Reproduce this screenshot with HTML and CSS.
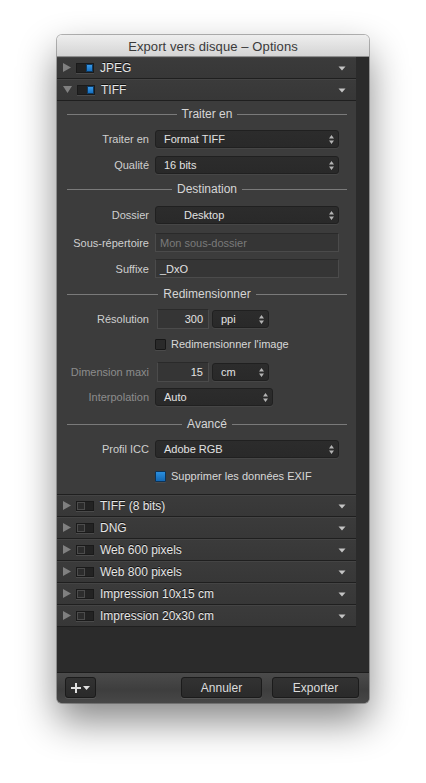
FILE: index.html
```html
<!DOCTYPE html>
<html lang="fr">
<head>
<meta charset="utf-8">
<title>Export vers disque – Options</title>
<link rel="stylesheet" href="styles.css">
</head>
<body>
<div class="window">
  <div class="titlebar">Export vers disque – Options</div>
  <div class="content">
    <div class="list">
      <div class="row">
        <svg class="disclosure" width="8" height="9" viewBox="0 0 8 9"><path d="M0 0 L8 4.5 L0 9 Z"/></svg>
        <span class="toggle on"><span class="knob"></span></span>
        <span class="row-title">JPEG</span>
        <svg class="menu-arrow" width="8" height="5" viewBox="0 0 8 5"><path d="M0.5 0.5 H7.5 L4 4.5 Z"/></svg>
      </div>
      <div class="row">
        <svg class="disclosure" width="9" height="9" viewBox="0 0 9 9"><path d="M0 1 H9 L4.5 8 Z"/></svg>
        <span class="toggle on"><span class="knob"></span></span>
        <span class="row-title">TIFF</span>
        <svg class="menu-arrow" width="8" height="5" viewBox="0 0 8 5"><path d="M0.5 0.5 H7.5 L4 4.5 Z"/></svg>
      </div>

      <div class="panel">
        <div class="section-head"><span>Traiter en</span></div>
        <div class="form-row mt8">
          <label class="label">Traiter en</label>
          <div class="select full"><span>Format TIFF</span><svg class="stepper" width="5" height="9" viewBox="0 0 5 9"><path d="M2.5 0 L5 3.5 H0 Z M0 5.5 H5 L2.5 9 Z"/></svg></div>
        </div>
        <div class="form-row mt8">
          <label class="label">Qualité</label>
          <div class="select full"><span>16 bits</span><svg class="stepper" width="5" height="9" viewBox="0 0 5 9"><path d="M2.5 0 L5 3.5 H0 Z M0 5.5 H5 L2.5 9 Z"/></svg></div>
        </div>

        <div class="section-head mt7"><span>Destination</span></div>
        <div class="form-row mt9">
          <label class="label">Dossier</label>
          <div class="select full folder"><span>Desktop</span><svg class="stepper" width="5" height="9" viewBox="0 0 5 9"><path d="M2.5 0 L5 3.5 H0 Z M0 5.5 H5 L2.5 9 Z"/></svg></div>
        </div>
        <div class="form-row mt9">
          <label class="label">Sous-répertoire</label>
          <div class="textfield full placeholder">Mon sous-dossier</div>
        </div>
        <div class="form-row mt8">
          <label class="label">Suffixe</label>
          <div class="textfield full">_DxO</div>
        </div>

        <div class="section-head mt9"><span>Redimensionner</span></div>
        <div class="form-row tall mt7">
          <label class="label">Résolution</label>
          <div class="combo">
            <div class="textfield number">300</div>
            <div class="select unit"><span>ppi</span><svg class="stepper" width="5" height="9" viewBox="0 0 5 9"><path d="M2.5 0 L5 3.5 H0 Z M0 5.5 H5 L2.5 9 Z"/></svg></div>
          </div>
        </div>
        <div class="form-row check-row mt9">
          <span></span>
          <div class="check"><span class="box"></span><span>Redimensionner l'image</span></div>
        </div>
        <div class="form-row tall mt12">
          <label class="label disabled">Dimension maxi</label>
          <div class="combo">
            <div class="textfield number">15</div>
            <div class="select unit"><span>cm</span><svg class="stepper" width="5" height="9" viewBox="0 0 5 9"><path d="M2.5 0 L5 3.5 H0 Z M0 5.5 H5 L2.5 9 Z"/></svg></div>
          </div>
        </div>
        <div class="form-row mt6">
          <label class="label disabled">Interpolation</label>
          <div class="select medium"><span>Auto</span><svg class="stepper" width="5" height="9" viewBox="0 0 5 9"><path d="M2.5 0 L5 3.5 H0 Z M0 5.5 H5 L2.5 9 Z"/></svg></div>
        </div>

        <div class="section-head mt10"><span>Avancé</span></div>
        <div class="form-row mt8">
          <label class="label">Profil ICC</label>
          <div class="select full"><span>Adobe RGB</span><svg class="stepper" width="5" height="9" viewBox="0 0 5 9"><path d="M2.5 0 L5 3.5 H0 Z M0 5.5 H5 L2.5 9 Z"/></svg></div>
        </div>
        <div class="form-row check-row mt12">
          <span></span>
          <div class="check"><span class="box checked"></span><span>Supprimer les données EXIF</span></div>
        </div>
      </div>

      <div class="row">
        <svg class="disclosure" width="8" height="9" viewBox="0 0 8 9"><path d="M0 0 L8 4.5 L0 9 Z"/></svg>
        <span class="toggle"><span class="knob"></span></span>
        <span class="row-title">TIFF (8 bits)</span>
        <svg class="menu-arrow" width="8" height="5" viewBox="0 0 8 5"><path d="M0.5 0.5 H7.5 L4 4.5 Z"/></svg>
      </div>
      <div class="row">
        <svg class="disclosure" width="8" height="9" viewBox="0 0 8 9"><path d="M0 0 L8 4.5 L0 9 Z"/></svg>
        <span class="toggle"><span class="knob"></span></span>
        <span class="row-title">DNG</span>
        <svg class="menu-arrow" width="8" height="5" viewBox="0 0 8 5"><path d="M0.5 0.5 H7.5 L4 4.5 Z"/></svg>
      </div>
      <div class="row">
        <svg class="disclosure" width="8" height="9" viewBox="0 0 8 9"><path d="M0 0 L8 4.5 L0 9 Z"/></svg>
        <span class="toggle"><span class="knob"></span></span>
        <span class="row-title">Web 600 pixels</span>
        <svg class="menu-arrow" width="8" height="5" viewBox="0 0 8 5"><path d="M0.5 0.5 H7.5 L4 4.5 Z"/></svg>
      </div>
      <div class="row">
        <svg class="disclosure" width="8" height="9" viewBox="0 0 8 9"><path d="M0 0 L8 4.5 L0 9 Z"/></svg>
        <span class="toggle"><span class="knob"></span></span>
        <span class="row-title">Web 800 pixels</span>
        <svg class="menu-arrow" width="8" height="5" viewBox="0 0 8 5"><path d="M0.5 0.5 H7.5 L4 4.5 Z"/></svg>
      </div>
      <div class="row">
        <svg class="disclosure" width="8" height="9" viewBox="0 0 8 9"><path d="M0 0 L8 4.5 L0 9 Z"/></svg>
        <span class="toggle"><span class="knob"></span></span>
        <span class="row-title">Impression 10x15 cm</span>
        <svg class="menu-arrow" width="8" height="5" viewBox="0 0 8 5"><path d="M0.5 0.5 H7.5 L4 4.5 Z"/></svg>
      </div>
      <div class="row">
        <svg class="disclosure" width="8" height="9" viewBox="0 0 8 9"><path d="M0 0 L8 4.5 L0 9 Z"/></svg>
        <span class="toggle"><span class="knob"></span></span>
        <span class="row-title">Impression 20x30 cm</span>
        <svg class="menu-arrow" width="8" height="5" viewBox="0 0 8 5"><path d="M0.5 0.5 H7.5 L4 4.5 Z"/></svg>
      </div>
    </div>

    <div class="footer">
      <div class="btn add">
        <svg width="10" height="10" viewBox="0 0 10 10"><path d="M4 0 H6 V4 H10 V6 H6 V10 H4 V6 H0 V4 H4 Z"/></svg>
        <svg width="7" height="4" viewBox="0 0 7 4"><path d="M0 0 H7 L3.5 4 Z"/></svg>
      </div>
      <div class="spacer"></div>
      <div class="btn cancel">Annuler</div>
      <div class="btn export">Exporter</div>
    </div>
  </div>
</div>
</body>
</html>
```

FILE: styles.css
```css
* { box-sizing: border-box; }

html, body {
  margin: 0;
  padding: 0;
  background: #ffffff;
}

body {
  font-family: "Liberation Sans", Arial, sans-serif;
  width: 426px;
  height: 783px;
  overflow: hidden;
  padding: 35px 0 0 57px;
}

.window {
  width: 312px;
  height: 668px;
  border-radius: 5px;
  display: flex;
  flex-direction: column;
  box-shadow: 0 18px 38px rgba(0, 0, 0, 0.48), 0 0 0 1px rgba(0, 0, 0, 0.28);
  overflow: hidden;
}

.titlebar {
  height: 22px;
  flex: none;
  background: linear-gradient(#eeeeee, #d4d4d4);
  border-bottom: 1px solid #8e8e8e;
  color: #3a3a3a;
  font-size: 13px;
  line-height: 23px;
  text-align: center;
  letter-spacing: 0.1px;
}

.content {
  flex: 1;
  display: flex;
  flex-direction: column;
  background: #2b2b2b;
}

.list {
  flex: 1;
  width: 299px;
  display: flex;
  flex-direction: column;
}

.row {
  height: 22px;
  flex: none;
  display: flex;
  align-items: center;
  padding: 0 10px 0 6px;
  background: linear-gradient(#3b3b3b, #373737);
  border-bottom: 1px solid #1f1f1f;
  box-shadow: inset 0 1px 0 #444444;
}

.disclosure {
  fill: #808080;
  flex: none;
  margin-right: 5px;
}

.toggle {
  width: 18px;
  height: 10px;
  flex: none;
  margin-right: 6px;
  background: #232323;
  border: 1px solid #1a1a1a;
  box-shadow: 0 1px 0 #4a4a4a;
  display: flex;
  align-items: center;
}

.toggle .knob {
  width: 8px;
  height: 8px;
  border: 1px solid #4c4c4c;
  background: #2c2c2c;
}

.toggle.on .knob {
  margin-left: 9px;
  border: 1px solid #0e3a63;
  background: linear-gradient(#3a9ae8, #1770bf);
}

.row-title {
  flex: 1;
  color: #e6e6e6;
  font-size: 12px;
  text-shadow: 0 -1px 0 #111111;
  padding-top: 1px;
}

.menu-arrow {
  fill: #c4c4c4;
  flex: none;
  margin-top: 1px;
}

.panel {
  flex: none;
  background: #3c3c3c;
  border-bottom: 1px solid #1f1f1f;
  padding: 5px 9px 12px 10px;
}

.section-head {
  height: 16px;
  display: flex;
  align-items: center;
  gap: 5px;
  color: #d6d6d6;
  font-size: 12px;
}

.section-head::before,
.section-head::after {
  content: "";
  flex: 1;
  height: 1px;
  background: #7a7a7a;
}

.form-row {
  display: grid;
  grid-template-columns: 82px auto;
  column-gap: 6px;
  align-items: center;
  height: 18px;
}

.form-row.tall { height: 20px; }
.form-row.check-row { height: 12px; }

.label {
  text-align: right;
  color: #cfcfcf;
  font-size: 11px;
  white-space: nowrap;
  margin-left: -10px;
}

.label.disabled { color: #8c8c8c; }

.select {
  height: 18px;
  display: flex;
  align-items: center;
  justify-content: space-between;
  padding: 0 4px 0 8px;
  background: linear-gradient(#2c2c2c, #292929);
  border: 1px solid #202020;
  border-radius: 3px;
  box-shadow: 0 1px 0 #464646;
  color: #e2e2e2;
  font-size: 11px;
}

.select.full { width: 184px; }
.select.medium { width: 118px; }
.select.unit { width: 57px; }
.select.folder { padding-left: 28px; }

.stepper {
  fill: #b4b4b4;
  flex: none;
}

.textfield {
  height: 19px;
  display: flex;
  align-items: center;
  padding: 0 4px;
  background: #353535;
  border: 1px solid #4b4b4b;
  border-top-color: #2a2a2a;
  color: #e2e2e2;
  font-size: 11px;
}

.textfield.full { width: 184px; }
.textfield.placeholder { color: #7a7a7a; }

.textfield.number {
  width: 52px;
  height: 20px;
  justify-content: flex-end;
  padding-right: 5px;
}

.combo {
  display: flex;
  align-items: center;
  gap: 3px;
  margin-left: 2px;
}

.check {
  display: flex;
  align-items: center;
  gap: 5px;
  color: #d8d8d8;
  font-size: 11px;
}

.check .box {
  width: 11px;
  height: 11px;
  flex: none;
  background: #2a2a2a;
  border: 1px solid #171717;
  border-radius: 1px;
  box-shadow: 0 1px 0 #4a4a4a;
}

.check .box.checked {
  background: linear-gradient(#2a8fe0, #1468b3);
  border-color: #0d3357;
}

.mt6 { margin-top: 6px; }
.mt7 { margin-top: 7px; }
.mt8 { margin-top: 8px; }
.mt9 { margin-top: 9px; }
.mt10 { margin-top: 10px; }
.mt12 { margin-top: 12px; }

.footer {
  height: 31px;
  flex: none;
  display: flex;
  align-items: center;
  gap: 10px;
  padding: 0 10px 1px 8px;
  background: linear-gradient(#4b4b4b, #3e3e3e 55%, #474747);
  border-top: 1px solid #1c1c1c;
}

.spacer { flex: 1; }

.btn {
  height: 21px;
  display: flex;
  align-items: center;
  justify-content: center;
  background: linear-gradient(#323232, #2a2a2a);
  border: 1px solid #1b1b1b;
  border-radius: 3px;
  box-shadow: 0 1px 0 #555555;
  color: #dcdcdc;
  font-size: 12px;
}

.btn.add {
  width: 31px;
  gap: 2px;
  fill: #e0e0e0;
}

.btn.cancel { width: 81px; }
.btn.export { width: 87px; }
```
